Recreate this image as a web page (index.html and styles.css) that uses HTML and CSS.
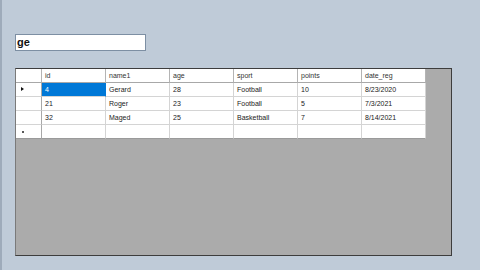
FILE: index.html
```html
<!DOCTYPE html>
<html lang="en">
<head>
    <meta charset="UTF-8">
    <title>Search Grid</title>
    <link rel="stylesheet" href="styles.css">
</head>
<body>
    <div class="form">
        <div class="search">ge</div>
        <div class="grid">
            <div class="table">
                <div class="cell head corner"></div>
                <div class="cell head">id</div>
                <div class="cell head">name1</div>
                <div class="cell head">age</div>
                <div class="cell head">sport</div>
                <div class="cell head">points</div>
                <div class="cell head">date_reg</div>

                <div class="cell rowhead"><span class="arrow"></span></div>
                <div class="cell selected">4</div>
                <div class="cell">Gerard</div>
                <div class="cell">28</div>
                <div class="cell">Football</div>
                <div class="cell">10</div>
                <div class="cell">8/23/2020</div>

                <div class="cell rowhead"></div>
                <div class="cell">21</div>
                <div class="cell">Roger</div>
                <div class="cell">23</div>
                <div class="cell">Football</div>
                <div class="cell">5</div>
                <div class="cell">7/3/2021</div>

                <div class="cell rowhead"></div>
                <div class="cell">32</div>
                <div class="cell">Maged</div>
                <div class="cell">25</div>
                <div class="cell">Basketball</div>
                <div class="cell">7</div>
                <div class="cell">8/14/2021</div>

                <div class="cell rowhead last"><span class="star"></span></div>
                <div class="cell last"></div>
                <div class="cell last"></div>
                <div class="cell last"></div>
                <div class="cell last"></div>
                <div class="cell last"></div>
                <div class="cell last"></div>
            </div>
        </div>
    </div>
</body>
</html>
```

FILE: styles.css
```css
body {
    margin: 0;
    padding: 0;
    font-family: "Liberation Sans", Arial, sans-serif;
}

.form {
    box-sizing: border-box;
    width: 480px;
    height: 270px;
    padding: 34px 0 0 13px;
    background: #bfcbd8;
    border-left: 2px solid #9eabba;
}

.search {
    box-sizing: border-box;
    width: 131px;
    height: 17px;
    padding: 0 1px;
    background: #fff;
    border: 1px solid #7d8fa3;
    font-size: 11px;
    font-weight: bold;
    line-height: 15px;
    color: #111;
}

.grid {
    box-sizing: border-box;
    width: 437px;
    height: 188px;
    margin-top: 17px;
    background: #ababab;
    border: 1px solid #3d3d3d;
    border-left-color: #7a7a7a;
}

.table {
    display: grid;
    grid-template-columns: 26px repeat(6, 64px);
    grid-auto-rows: 14px;
}

.cell {
    box-sizing: border-box;
    padding-left: 3px;
    background: #fff;
    border-right: 1px solid #d4d4d4;
    border-bottom: 1px solid #d4d4d4;
    font-size: 7px;
    line-height: 13px;
    color: #1a1a1a;
    white-space: nowrap;
    overflow: hidden;
}

.cell.head {
    border-right-color: #b4b4b4;
    border-bottom-color: #a8a8a8;
    color: #333;
}

.cell.rowhead {
    position: relative;
    border-right-color: #a8a8a8;
}

.cell.last {
    border-bottom-color: #9a9a9a;
}

.cell.selected {
    background: #0078d7;
    color: #fff;
    border-right-color: #0078d7;
}

.arrow {
    position: absolute;
    left: 5px;
    top: 4px;
    width: 0;
    height: 0;
    border-top: 2.5px solid transparent;
    border-bottom: 2.5px solid transparent;
    border-left: 3px solid #111;
}

.star {
    position: absolute;
    left: 6px;
    top: 6px;
    width: 2px;
    height: 2px;
    background: #222;
    border-radius: 1px;
}
```
